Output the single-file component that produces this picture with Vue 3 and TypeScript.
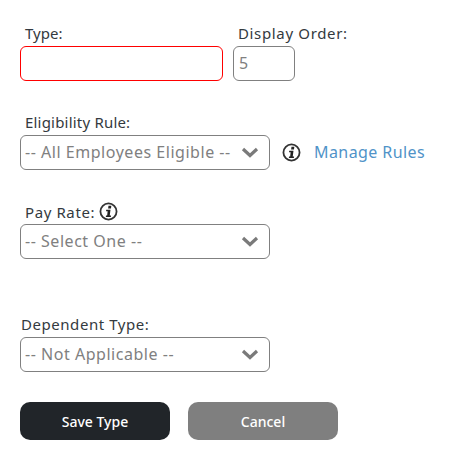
<script setup lang="ts">
import { ref } from "vue";

const typeName = ref("");
const displayOrder = ref("5");
const eligibility = ref("-- All Employees Eligible --");
const payRate = ref("-- Select One --");
const dependentType = ref("-- Not Applicable --");
</script>

<template>
	<form class="page" @submit.prevent>
		<div class="row first">
			<div class="field">
				<label class="label type-label">Type:</label>
				<input v-model="typeName" class="input type-input" type="text" />
			</div>
			<div class="field order">
				<label class="label order-label">Display Order:</label>
				<input v-model="displayOrder" class="input order-input" type="text" />
			</div>
		</div>

		<div class="field eligibility">
			<label class="label rule-label">Eligibility Rule:</label>
			<div class="inline">
				<div class="select-wrap">
					<select v-model="eligibility" class="select">
						<option>-- All Employees Eligible --</option>
					</select>
					<svg class="chevron" viewBox="0 0 18 11"><path d="M2 2l7 6.5L16 2" /></svg>
				</div>
				<svg class="info big" viewBox="0 0 20 20">
					<circle cx="10" cy="10" r="8.5" />
					<path class="glyph" d="M10 4h3l-.4 2.8h-3zM7.6 8.2h4.5l-.8 6h1.4l-.2 1.6H7.2l.2-1.6h1.2l.5-4.4H7.4z" />
				</svg>
				<a class="link" href="#">Manage Rules</a>
			</div>
		</div>

		<div class="field pay">
			<div class="label pay-label">
				<label>Pay Rate:</label>
				<svg class="info" viewBox="0 0 20 20">
					<circle cx="10" cy="10" r="8.5" />
					<path class="glyph" d="M10 4h3l-.4 2.8h-3zM7.6 8.2h4.5l-.8 6h1.4l-.2 1.6H7.2l.2-1.6h1.2l.5-4.4H7.4z" />
				</svg>
			</div>
			<div class="select-wrap">
				<select v-model="payRate" class="select">
					<option>-- Select One --</option>
				</select>
				<svg class="chevron" viewBox="0 0 18 11"><path d="M2 2l7 6.5L16 2" /></svg>
			</div>
		</div>

		<div class="field dependent">
			<label class="label dep-label">Dependent Type:</label>
			<div class="select-wrap">
				<select v-model="dependentType" class="select">
					<option>-- Not Applicable --</option>
				</select>
				<svg class="chevron" viewBox="0 0 18 11"><path d="M2 2l7 6.5L16 2" /></svg>
			</div>
		</div>

		<div class="buttons">
			<button class="btn save" type="submit">Save Type</button>
			<button class="btn cancel" type="button">Cancel</button>
		</div>
	</form>
</template>

<style>
	html,
	body {
		background: #fff;
	}
</style>

<style scoped>
	.page {
		box-sizing: border-box;
		width: 453px;
		height: 457px;
		padding: 23px 0 0 20px;
		font-family: "Noto Sans", sans-serif;
		font-size: 15px;
		color: #343a40;
	}

	.row {
		display: flex;
		gap: 10px;
	}

	.field {
		display: flex;
		flex-direction: column;
	}

	.label {
		height: 23px;
		line-height: 20px;
		padding-left: 5px;
		white-space: nowrap;
		letter-spacing: 0.2px;
	}

	.type-label {
		letter-spacing: 0;
	}

	.order-label {
		padding-left: 5px;
		letter-spacing: 0.65px;
	}

	.pay-label {
		letter-spacing: 0.6px;
		height: 21px;
		margin-bottom: 2px;
		display: flex;
		align-items: center;
		gap: 4px;
	}

	.dep-label {
		padding-left: 1px;
		letter-spacing: 0.55px;
	}

	.input {
		box-sizing: border-box;
		height: 35px;
		border-radius: 6px;
		border: 1px solid #808080;
		outline: none;
		padding: 0 5px 2px;
		font: inherit;
		font-size: 16px;
		color: #808080;
		background: #fff;
	}

	.type-input {
		width: 203px;
		border-color: #f00;
	}

	.order-input {
		width: 62px;
	}

	.eligibility {
		margin-top: 31px;
	}

	.pay {
		margin-top: 31px;
	}

	.dependent {
		margin-top: 55px;
	}

	.inline {
		display: flex;
		align-items: center;
	}

	.select-wrap {
		position: relative;
		width: 250px;
		height: 35px;
	}

	.select {
		appearance: none;
		box-sizing: border-box;
		display: block;
		width: 100%;
		height: 100%;
		border: 1px solid #808080;
		border-radius: 6px;
		background: #fff;
		padding: 0 4px 2px;
		font: inherit;
		font-size: 16px;
		letter-spacing: 0.53px;
		color: #808080;
		outline: none;
	}

	.chevron {
		position: absolute;
		right: 11px;
		top: 12px;
		width: 18px;
		height: 11px;
		fill: none;
		stroke: #7a7a7a;
		stroke-width: 3.2;
		pointer-events: none;
	}

	.info {
		flex: none;
		width: 19px;
		height: 19px;
	}

	.info circle {
		fill: #fff;
		stroke: #333;
		stroke-width: 1.9;
	}

	.info .glyph {
		fill: #222;
	}

	.big {
		margin-left: 12px;
	}

	.link {
		margin-left: 13px;
		padding-bottom: 1px;
		color: #5093c8;
		text-decoration: none;
		font-size: 16px;
		letter-spacing: 0.42px;
	}

	.buttons {
		display: flex;
		gap: 18px;
		margin-top: 30px;
	}

	.btn {
		width: 150px;
		height: 38px;
		border: none;
		border-radius: 10px;
		color: #fff;
		font: inherit;
		font-size: 14px;
		font-weight: 500;
	}

	.save {
		background: #212529;
	}

	.cancel {
		background: #7f7f7f;
	}
</style>
